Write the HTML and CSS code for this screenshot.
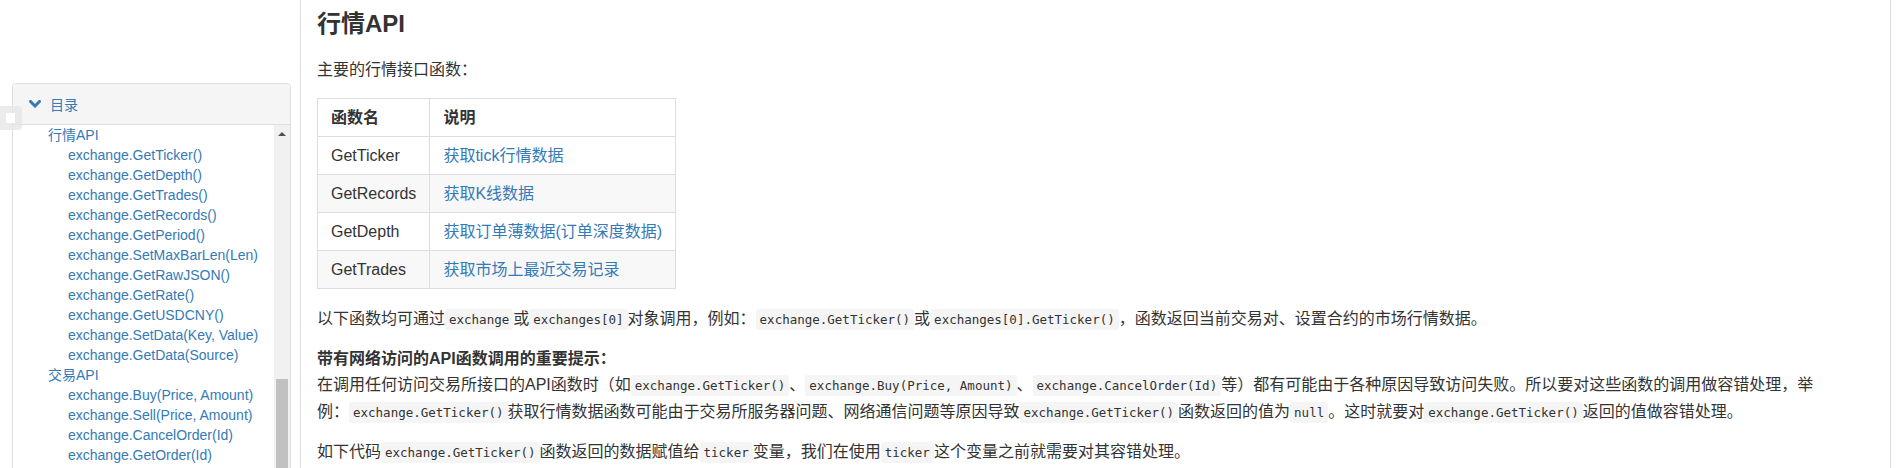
FILE: index.html
```html
<!DOCTYPE html>
<html lang="zh-CN">
<head>
    <meta charset="UTF-8">
    <meta name="viewport" content="width=device-width, initial-scale=1.0">
    <title>行情API</title>
    <link rel="stylesheet" href="styles.css">
</head>
<body>
    <!-- floating side tab, half hidden at the left edge -->
    <div class="float-tab"><span></span></div>

    <aside class="sidebar">
        <div class="toc">
            <div class="toc-head">
                <svg class="chevron" width="12" height="8" viewBox="0 0 12 8">
                    <polyline points="1.5,1.5 6,6 10.5,1.5" fill="none" stroke="#337ab7" stroke-width="3" stroke-linecap="square"/>
                </svg>
                <span>目录</span>
            </div>
            <div class="toc-body">
                <ul class="toc-list">
                    <li class="lvl1"><a href="#">行情API</a></li>
                    <li class="lvl2"><a href="#">exchange.GetTicker()</a></li>
                    <li class="lvl2"><a href="#">exchange.GetDepth()</a></li>
                    <li class="lvl2"><a href="#">exchange.GetTrades()</a></li>
                    <li class="lvl2"><a href="#">exchange.GetRecords()</a></li>
                    <li class="lvl2"><a href="#">exchange.GetPeriod()</a></li>
                    <li class="lvl2"><a href="#">exchange.SetMaxBarLen(Len)</a></li>
                    <li class="lvl2"><a href="#">exchange.GetRawJSON()</a></li>
                    <li class="lvl2"><a href="#">exchange.GetRate()</a></li>
                    <li class="lvl2"><a href="#">exchange.GetUSDCNY()</a></li>
                    <li class="lvl2"><a href="#">exchange.SetData(Key, Value)</a></li>
                    <li class="lvl2"><a href="#">exchange.GetData(Source)</a></li>
                    <li class="lvl1"><a href="#">交易API</a></li>
                    <li class="lvl2"><a href="#">exchange.Buy(Price, Amount)</a></li>
                    <li class="lvl2"><a href="#">exchange.Sell(Price, Amount)</a></li>
                    <li class="lvl2"><a href="#">exchange.CancelOrder(Id)</a></li>
                    <li class="lvl2"><a href="#">exchange.GetOrder(Id)</a></li>
                </ul>
                <!-- scrollbar of the toc list -->
                <div class="scrollbar">
                    <div class="arrow"></div>
                    <div class="thumb"></div>
                </div>
            </div>
        </div>
    </aside>

    <main class="content">
        <h2>行情API</h2>
        <p class="intro">主要的行情接口函数：</p>

        <table class="api-table">
            <thead>
                <tr><th>函数名</th><th>说明</th></tr>
            </thead>
            <tbody>
                <tr><td>GetTicker</td><td><a href="#">获取tick行情数据</a></td></tr>
                <tr><td>GetRecords</td><td><a href="#">获取K线数据</a></td></tr>
                <tr><td>GetDepth</td><td><a href="#">获取订单薄数据(订单深度数据)</a></td></tr>
                <tr><td>GetTrades</td><td><a href="#">获取市场上最近交易记录</a></td></tr>
            </tbody>
        </table>

        <p>以下函数均可通过<code>exchange</code>或<code>exchanges[0]</code>对象调用，例如：<code>exchange.GetTicker()</code>或<code>exchanges[0].GetTicker()</code>，函数返回当前交易对、设置合约的市场行情数据。</p>

        <p><strong>带有网络访问的API函数调用的重要提示：</strong><br>在调用任何访问交易所接口的API函数时（如<code>exchange.GetTicker()</code>、<code>exchange.Buy(Price, Amount)</code>、<code>exchange.CancelOrder(Id)</code>等）都有可能由于各种原因导致访问失败。所以要对这些函数的调用做容错处理，举例：<code>exchange.GetTicker()</code>获取行情数据函数可能由于交易所服务器问题、网络通信问题等原因导致<code>exchange.GetTicker()</code>函数返回的值为<code>null</code>。这时就要对<code>exchange.GetTicker()</code>返回的值做容错处理。</p>

        <p>如下代码<code>exchange.GetTicker()</code>函数返回的数据赋值给<code>ticker</code>变量，我们在使用<code>ticker</code>这个变量之前就需要对其容错处理。</p>
    </main>
</body>
</html>
```

FILE: styles.css
```css
/* Page frame */
body {
    margin: 0;
    height: 468px;
    overflow: hidden;
    display: flex;
    font-family: "Liberation Sans", "Noto Sans CJK SC", sans-serif;
    color: #333;
    background: #fff;
}

a {
    color: #337ab7;
    text-decoration: none;
}

/* Floating tab at the left edge */
.float-tab {
    position: fixed;
    left: 0;
    top: 106px;
    width: 22px;
    height: 24px;
    display: flex;
    align-items: center;
    padding-left: 6px;
    box-sizing: border-box;
    background: rgba(228, 228, 228, 0.75);
    border-radius: 0 4px 4px 0;
}

.float-tab span {
    width: 9px;
    height: 10px;
    background: #fff;
}

/* Sidebar / table of contents */
.sidebar {
    width: 300px;
    flex-shrink: 0;
    padding: 83px 9px 0 12px;
    box-sizing: border-box;
}

.toc {
    border: 1px solid #ddd;
    border-radius: 4px 4px 0 0;
    height: 440px;
    display: flex;
    flex-direction: column;
}

.toc-head {
    height: 40px;
    flex-shrink: 0;
    display: flex;
    align-items: center;
    gap: 9px;
    padding-left: 16px;
    background: #f5f5f5;
    border-bottom: 1px solid #ddd;
    border-radius: 3px 3px 0 0;
    color: #337ab7;
    font-size: 14px;
}

.chevron {
    display: block;
}

.toc-body {
    flex: 1;
    display: flex;
    min-height: 0;
}

.toc-list {
    flex: 1;
    list-style: none;
    margin: 0;
    padding: 0;
    font-size: 14px;
    line-height: 20px;
    overflow: hidden;
    white-space: nowrap;
}

.toc-list .lvl1 {
    padding-left: 35px;
}

.toc-list .lvl2 {
    padding-left: 55px;
}

.scrollbar {
    width: 16px;
    flex-shrink: 0;
    background: #f1f1f1;
    display: flex;
    flex-direction: column;
    align-items: center;
}

.scrollbar .arrow {
    margin-top: 7px;
    width: 0;
    height: 0;
    border-left: 4px solid transparent;
    border-right: 4px solid transparent;
    border-bottom: 4px solid #505050;
}

.scrollbar .thumb {
    margin-top: 243px;
    width: 12px;
    height: 120px;
    background: #c1c1c1;
}

/* Main article */
.content {
    width: 1591px;
    flex-shrink: 0;
    border-left: 1px solid #ddd;
    border-right: 1px solid #ddd;
    padding: 9px 68px 0 16px;
    box-sizing: border-box;
    font-size: 16px;
}

h2 {
    font-size: 24px;
    line-height: 29px;
    margin: 0 0 19px;
}

p {
    margin: 0 0 13px;
    line-height: 26px;
}

p.intro {
    margin-bottom: 15px;
}

code {
    font-family: "DejaVu Sans Mono", monospace;
    font-size: 12.5px;
    background: #f5f5f5;
    padding: 3px 4px;
    border-radius: 3px;
}

/* Functions table */
.api-table {
    border-collapse: collapse;
    margin-bottom: 17px;
}

.api-table th,
.api-table td {
    border: 1px solid #ddd;
    padding: 8px 13px;
    line-height: 21px;
    text-align: left;
    white-space: nowrap;
}

.api-table tbody tr:nth-child(even) {
    background: #f8f8f8;
}
```
